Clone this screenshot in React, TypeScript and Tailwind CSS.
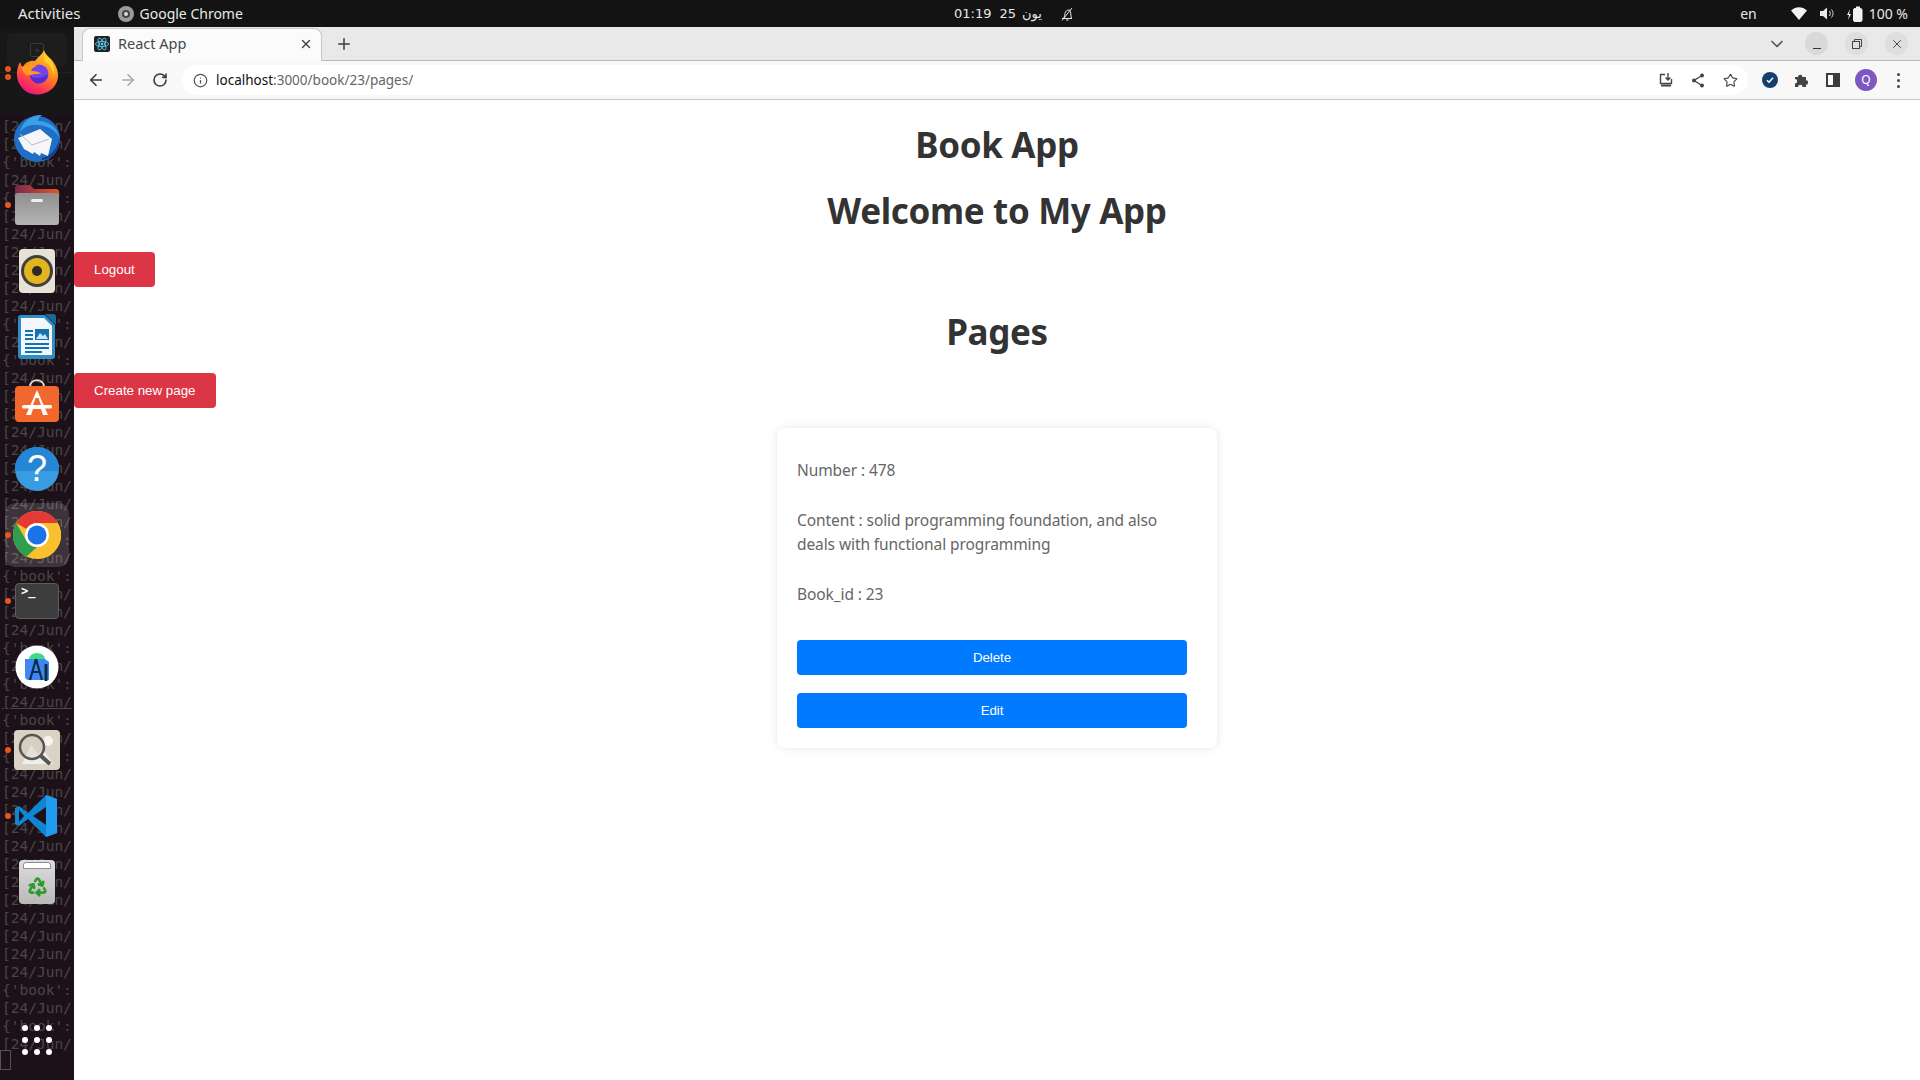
import React from 'react';
import { ArrowLeft, ArrowRight, ChevronDown, Info, Plus, Recycle, RotateCw, Star, X } from 'lucide-react';

// terminal log running behind the translucent dock
const logLines = 'LLBLBLLLLLLBLBLLLLLLLLLBLBLLLBLBLBLBLLLLLLLLLLLLBLBL'.split('');

const Dot = ({ top }: { top: number }) => (
  <span className="absolute left-[5px] h-[6px] w-[6px] rounded-full bg-[#e95420]" style={{ top }} />
);

const DockItem = ({ children, dots = [], className = '' }: { children: React.ReactNode; dots?: number[]; className?: string }) => (
  <div className={`relative flex h-[66px] w-[74px] shrink-0 items-center justify-center ${className}`}>
    {dots.map((d) => (
      <Dot key={d} top={d} />
    ))}
    {children}
  </div>
);

const FirefoxIcon = () => (
  <svg className="mb-[2px]" width="44" height="46" viewBox="0 0 44 46">
    <defs>
      <linearGradient id="ffa" x1="0.8" y1="0" x2="0.3" y2="1">
        <stop offset="0" stopColor="#ffd52e" />
        <stop offset="0.45" stopColor="#ff8a1f" />
        <stop offset="0.78" stopColor="#ff3750" />
        <stop offset="1" stopColor="#e31587" />
      </linearGradient>
    </defs>
    <path d="M29 1c1 5 7 8 10 13 6 9 5 19-1 25-8 8-22 9-30 1C1 33 0 22 5 13c1 2 1 4 3 5 2-5 8-7 12-6 3-4 7-6 9-11z" fill="url(#ffa)" />
    <circle cx="24" cy="25" r="9.500" fill="#7542e5" />
    <path d="M15 27c4 3 12 3 18-2-1 6-5 10-10 9.500-4-.5-7-3.500-8-7.500z" fill="#592acb" />
    <path d="M7 18c5-3 10-4 15-1-4 1-5 3-6 5 5 0 9 1 10 3-5-1-12 2-15 1-2-2-4-5-4-8z" fill="#ff9a1f" />
    <path d="M29 4c6 5 12 13 10 24-1-8-4-13-10-16z" fill="#ffcf2b" />
  </svg>
);

const ThunderbirdIcon = () => (
  <svg className="mb-[2px]" width="50" height="48" viewBox="0 0 50 48">
    <circle cx="25" cy="25" r="23" fill="#1f6fc4" />
    <path d="M8 18C10 8 20 0 30 1c-3 2-4 4-4 6 11 0 20 7 22 17-4-7-11-12-22-13C18 10 12 13 8 18z" fill="#3aa0e8" />
    <path d="M30 44c9-2 16-10 17-19 1 11-7 20-17 21z" fill="#123d8c" />
    <path d="M6 24L28 15l12 10-4 17-7-3-1 3-6-4-1 2-9-5z" fill="#f5f6f8" />
    <path d="M8 20l12 11 17-6" fill="none" stroke="#b9bcc4" strokeWidth="1" />
  </svg>
);

const FilesIcon = () => (
  <svg width="46" height="42" viewBox="0 0 46 42">
    <defs>
      <linearGradient id="fold" x1="0" y1="0" x2="1" y2="0">
        <stop offset="0" stopColor="#77294d" />
        <stop offset="1" stopColor="#e95420" />
      </linearGradient>
      <linearGradient id="foldb" x1="0" y1="0" x2="0" y2="1">
        <stop offset="0" stopColor="#8f8f8f" />
        <stop offset="1" stopColor="#b5b5b5" />
      </linearGradient>
    </defs>
    <path d="M1 4a3 3 0 013-3h12l4 4h22a3 3 0 013 3v14H1z" fill="url(#fold)" />
    <rect x="1" y="9" width="44" height="32" rx="3" fill="url(#foldb)" />
    <rect x="17" y="15" width="12" height="3" rx="1.500" fill="#eeeeee" />
  </svg>
);

const SpeakerIcon = () => (
  <svg width="38" height="46" viewBox="0 0 38 46">
    <rect x="1" y="1" width="36" height="44" rx="4" fill="#e6e2d8" />
    <circle cx="19" cy="23" r="16" fill="#3f3f3f" />
    <circle cx="19" cy="23" r="13" fill="#e2b420" />
    <circle cx="19" cy="23" r="5" fill="#2e2a20" />
  </svg>
);

const WriterIcon = () => (
  <svg width="38" height="46" viewBox="0 0 38 46">
    <path d="M3 1h24l10 10v31a3 3 0 01-3 3H3a3 3 0 01-3-3V4a3 3 0 013-3z" fill="#2d8fc6" />
    <path d="M3 4h23l8 8v29H3z" fill="#f4f7f9" />
    <path d="M27 0l11 11V3a3 3 0 00-3-3z" fill="#1b6a99" />
    <path d="M7 16h8v2H7zM7 20h8v2H7zM7 24h8v2H7zM7 29h24v2H7zM7 33h24v2H7zM7 37h17v2H7z" fill="#1273b2" />
    <path d="M17 15h14v11H17z" fill="#1273b2" />
    <path d="M18 25l4-6 3 3 2-2 3 5z" fill="#cfe5f3" />
  </svg>
);

const SoftwareIcon = () => (
  <svg className="mb-[4px]" width="46" height="44" viewBox="0 0 46 44">
    <path d="M16 8c0-9 14-9 14 0" fill="none" stroke="#e7d7c9" strokeWidth="2" />
    <rect x="1" y="7" width="44" height="36" rx="4" fill="#f2682c" />
    <path d="M23 11l-11 25h5l2-6h8l2 6h5L23 11z" fill="#fff" />
    <path d="M21.500 19h3l2.500 7h-8z" fill="#f2682c" />
    <rect x="8" y="26" width="30" height="3.500" rx="1.500" fill="#fff" />
  </svg>
);

const HelpIcon = () => (
  <div className="relative flex h-[44px] w-[44px] items-center justify-center overflow-hidden rounded-full bg-[#3a9ce0]">
    <span className="absolute inset-x-0 top-0 h-[24px] bg-[#2586d3]" />
    <span className="relative font-['Liberation_Sans',sans-serif] text-[36px] leading-none text-white">?</span>
  </div>
);

const ChromeIcon = ({ size = 48 }: { size?: number }) => (
  <svg width={size} height={size} viewBox="0 0 48 48">
    <circle cx="24" cy="24" r="24" fill="#fbc02d" />
    <path d="M24 0a24 24 0 0120.8 12H24a12 12 0 00-10.400 6L3.200 12A24 24 0 0124 0z" fill="#e53935" />
    <path d="M0 24a24 24 0 013.200-12l10.400 18a12 12 0 0010.400 6L13.600 45.600A24 24 0 010 24z" fill="#2e9e4f" />
    <path d="M24 12h20.800A24 24 0 0124 48l10.400-18A12 12 0 0024 12z" fill="#fbc02d" />
    <circle cx="24" cy="24" r="12" fill="#fff" />
    <circle cx="24" cy="24" r="9.500" fill="#1a73e8" />
  </svg>
);

const TerminalIcon = () => (
  <div className="h-[36px] w-[44px] rounded-[4px] border border-[#5c5c5c] bg-[#3d3d3d] pl-[5px] font-['DejaVu_Sans_Mono',monospace] text-[12px] leading-[14px] font-bold text-white">
    &gt;_
  </div>
);

const StudioIcon = () => (
  <svg width="44" height="44" viewBox="0 0 44 44">
    <circle cx="22" cy="22" r="21.500" fill="#fff" />
    <path d="M14 14a8 6 0 0116 0z" fill="#3ddc84" />
    <path d="M10 14h20l4 3v18H14a4 4 0 01-4-4z" fill="#4285f4" />
    <path d="M21 14l-6 21M21 14l6 21M17.500 27h7" fill="none" stroke="#073042" strokeWidth="2.200" />
    <circle cx="21" cy="17" r="2" fill="#073042" />
    <path d="M31 19v17" stroke="#073042" strokeWidth="3" />
  </svg>
);

const ViewerIcon = () => (
  <svg width="46" height="40" viewBox="0 0 46 40">
    <rect x="0" y="0" width="46" height="40" rx="4" fill="#d8d3c4" />
    <path d="M8 34l9-19 7 9 5-5 10 15z" fill="#eeeeea" />
    <circle cx="34" cy="11" r="5" fill="#f5f4ee" />
    <circle cx="18" cy="17" r="12" fill="#cfcabb" fillOpacity="0.4" stroke="#555" strokeWidth="2.500" />
    <path d="M27 26l9 8" stroke="#555" strokeWidth="4" />
  </svg>
);

const VSCodeIcon = () => (
  <svg width="44" height="44" viewBox="0 0 44 44">
    <path d="M31 1L13 19 4 12 0 14v16l4 2 9-7 18 18 11-4V5z" fill="#0e86d4" />
    <path d="M31 1l11 4v34l-11 4z" fill="#1f9cf0" />
    <path d="M31 13L18 22l13 9z" fill="#1c1119" />
    <path d="M4 16l5 6-5 6z" fill="#1c1119" />
  </svg>
);

const TrashIcon = () => (
  <div className="relative flex h-[44px] w-[36px] items-center justify-center rounded-[4px] bg-gradient-to-b from-[#dedede] to-[#b9b9b9] pt-[8px]">
    <span className="absolute inset-x-[4px] top-[2px] h-[7px] rounded-t-[3px] border border-[#8d8d8d] bg-white" />
    <Recycle size={21} strokeWidth={3} className="text-[#2f9a2b]" />
  </div>
);

const AppGrid = () => (
  <div className="grid grid-cols-3 gap-[6px]">
    {Array.from({ length: 9 }).map((_, i) => (
      <span key={i} className="h-[6px] w-[6px] rounded-full bg-white" />
    ))}
  </div>
);

const Dock = () => (
  <aside className="relative w-[74px] shrink-0 overflow-hidden bg-[#1c1119]">
    <div className="h-[87px] bg-[#171717]">
      <div className="h-[46px] border-b border-[#222] px-[7px] pt-[6px]">
        <div className="flex h-[34px] items-center justify-center rounded-[5px] bg-[#1d1d1d]">
          <span className="flex h-[14px] w-[14px] items-center justify-center rounded-[2px] border border-[#3a3a3a] text-[10px] leading-none text-[#3a3a3a]">+</span>
        </div>
      </div>
    </div>
    <div className="pt-[3px] pl-[2px] font-['DejaVu_Sans_Mono',monospace] text-[14.5px] leading-[18px] whitespace-nowrap text-[#4a4745]">
      {logLines.map((kind, i) =>
        kind === 'L' ? (
          <div key={i} className={i === 32 ? 'underline' : ''}>
            [24/Jun/
          </div>
        ) : (
          <div key={i}>{"{'book':"}</div>
        ),
      )}
    </div>
    <span className="absolute bottom-[10px] left-0 h-[20px] w-[11px] border border-[#55505a] bg-[#1c1119]" />

    <div className="absolute inset-0 flex flex-col items-center pt-[13px]">
      <DockItem dots={[26, 34]}>
        <FirefoxIcon />
      </DockItem>
      <DockItem>
        <ThunderbirdIcon />
      </DockItem>
      <DockItem dots={[30]}>
        <FilesIcon />
      </DockItem>
      <DockItem>
        <SpeakerIcon />
      </DockItem>
      <DockItem>
        <WriterIcon />
      </DockItem>
      <DockItem>
        <SoftwareIcon />
      </DockItem>
      <DockItem>
        <HelpIcon />
      </DockItem>
      <DockItem dots={[30]}>
        <div className="flex h-[64px] w-[64px] items-center justify-center rounded-[10px] bg-white/15">
          <ChromeIcon />
        </div>
      </DockItem>
      <DockItem dots={[30]}>
        <TerminalIcon />
      </DockItem>
      <DockItem>
        <StudioIcon />
      </DockItem>
      <DockItem dots={[30]} className="mt-[17px]">
        <ViewerIcon />
      </DockItem>
      <DockItem dots={[30]}>
        <VSCodeIcon />
      </DockItem>
      <DockItem>
        <TrashIcon />
      </DockItem>
      <DockItem className="mt-auto mb-[7px]">
        <AppGrid />
      </DockItem>
    </div>
  </aside>
);

const TopBar = () => (
  <header className="relative flex h-[27px] shrink-0 items-center bg-[#131313] font-['Noto_Sans',sans-serif] text-[14px] text-[#e8e8e8]">
    <span className="ml-[18px] text-[15px]">Activities</span>
    <span className="ml-[37px] flex items-center gap-[6px]">
      <span className="flex h-[16px] w-[16px] items-center justify-center rounded-full bg-[#9a9a9a]">
        <span className="h-[8px] w-[8px] rounded-full border-2 border-[#444] bg-[#ddd]" />
      </span>
      Google Chrome
    </span>
    <div className="absolute left-[954px] flex items-center font-['DejaVu_Sans',sans-serif] text-[13px]">
      <span>01:19</span>
      <span className="ml-[8px]">25</span>
      <span className="ml-[6px]">یون</span>
      <svg className="ml-[18px]" width="14" height="14" viewBox="0 0 14 14" fill="none" stroke="#e8e8e8" strokeWidth="1">
        <path d="M2 11.500h10M3.500 11.500c1.500-2 1-4.500 2-6.500S9 2.500 10 3.500s.5 5 1.500 8M6 13h2.500M2 13.500L12 1" />
      </svg>
    </div>
    <div className="ml-auto flex items-center">
      <span>en</span>
      <svg className="ml-[34px]" width="16" height="13" viewBox="0 0 16 13">
        <path d="M0 3.500C4.500-1 11.500-1 16 3.500L8 13z" fill="#f2f2f2" />
      </svg>
      <svg className="ml-[13px]" width="15" height="13" viewBox="0 0 15 13" fill="none">
        <path d="M0 4h3l4-3.500v12L3 9H0z" fill="#e8e8e8" />
        <path d="M9.500 4c1 1.500 1 3.500 0 5M11.500 2.500c2 2.500 2 5.500 0 8" stroke="#e8e8e8" />
      </svg>
      <svg className="ml-[12px]" width="16" height="16" viewBox="0 0 16 16" fill="none">
        <path d="M3 3L0 9h2l-1 5 3-6H2z" fill="#f2f2f2" />
        <rect x="6.500" y="2.500" width="8.500" height="13" rx="1.500" fill="#f2f2f2" stroke="#f2f2f2" />
        <rect x="9" y="0.500" width="4" height="2" fill="#f2f2f2" />
      </svg>
      <span className="mr-[12px] ml-[6px]">100 %</span>
    </div>
  </header>
);

const TabStrip = () => (
  <div className="relative flex h-[34px] shrink-0 items-end border-b border-[#b9b9b9] bg-[#e9e9e9] font-['Noto_Sans',sans-serif]">
    <div className="relative z-10 ml-[8px] -mb-px flex h-[33px] w-[240px] items-center rounded-t-[8px] border-x border-t border-[#c8c8c8] bg-[#fbfbfb] pr-[8px] pb-[3px] pl-[11px]">
      <svg width="16" height="16" viewBox="0 0 16 16" fill="none" stroke="#61dafb" strokeWidth="0.8">
        <rect width="16" height="16" rx="2" fill="#20232a" stroke="none" />
        <ellipse cx="8" cy="8" rx="6.500" ry="2.600" />
        <ellipse cx="8" cy="8" rx="6.500" ry="2.600" transform="rotate(60 8 8)" />
        <ellipse cx="8" cy="8" rx="6.500" ry="2.600" transform="rotate(120 8 8)" />
        <circle cx="8" cy="8" r="1.300" fill="#61dafb" stroke="none" />
      </svg>
      <span className="ml-[8px] text-[14.5px] text-[#45494d]">React App</span>
      <X size={14} strokeWidth={2.5} className="ml-auto text-[#444]" />
    </div>
    <Plus size={18} strokeWidth={2} className="mb-[7px] ml-[13px] text-[#3c3c3c]" />
    <ChevronDown size={20} strokeWidth={2} className="mb-[6px] ml-auto text-[#555]" />
    <div className="mr-[12px] mb-[5px] ml-[18px] flex gap-[17px]">
      <span className="flex h-[23px] w-[23px] items-end justify-center rounded-full bg-[#d9d9d9] pb-[6px]">
        <span className="h-[1px] w-[8px] bg-[#333]" />
      </span>
      <span className="relative flex h-[23px] w-[23px] items-center justify-center rounded-full bg-[#dedede]">
        <svg width="10" height="10" viewBox="0 0 10 10" fill="none" stroke="#444">
          <rect x="0.500" y="2.500" width="7" height="7" />
          <path d="M2.500 2.500v-2h7v7h-2" />
        </svg>
      </span>
      <span className="flex h-[23px] w-[23px] items-center justify-center rounded-full bg-[#dedede]">
        <X size={14} strokeWidth={1.5} className="text-[#333]" />
      </span>
    </div>
  </div>
);

const ToolBar = () => (
  <div className="flex h-[39px] shrink-0 items-center border-b border-[#c8c8c8] bg-[#f8f8f8] font-['Noto_Sans',sans-serif]">
    <ArrowLeft size={18} strokeWidth={2.2} className="ml-[13px] text-[#3c3c3c]" />
    <ArrowRight size={18} strokeWidth={2.2} className="ml-[14px] text-[#a9a9a9]" />
    <RotateCw size={16} strokeWidth={2.4} className="ml-[15px] text-[#3c3c3c]" />
    <div className="ml-[14px] flex h-[30px] flex-1 items-center rounded-full bg-white pl-[11px]">
      <Info size={15} strokeWidth={2} className="text-[#555]" />
      <span className="ml-[8px] text-[13.5px] text-[#111]">localhost</span>
      <span className="text-[13.5px] text-[#666]">:3000/book/23/pages/</span>
      <svg className="ml-auto" width="16" height="16" viewBox="0 0 16 16" fill="none" stroke="#444" strokeWidth="1.400">
        <path d="M13.500 7v4.500h-11v-9H7M10 1v6.500M7.500 5.500L10 8l2.500-2.500" />
        <path d="M3 13.500h10" strokeWidth="2" />
      </svg>
      <svg className="ml-[17px]" width="14" height="15" viewBox="0 0 14 15" fill="none" stroke="#444" strokeWidth="1.300">
        <path d="M11 2.500L3 7.500l8 5" />
        <circle cx="11" cy="2.500" r="2" fill="#444" stroke="none" />
        <circle cx="3" cy="7.500" r="2" fill="#444" stroke="none" />
        <circle cx="11" cy="12.500" r="2" fill="#444" stroke="none" />
      </svg>
      <Star size={15} strokeWidth={1.8} className="mr-[10px] ml-[18px] text-[#444]" />
    </div>
    <span className="ml-[14px] flex h-[16px] w-[16px] items-center justify-center rounded-full bg-[#163e6b]">
      <svg width="10" height="10" viewBox="0 0 10 10" fill="none" stroke="#fff" strokeWidth="1.500">
        <path d="M2 5.200l2 2 4-4.400" />
      </svg>
    </span>
    <svg className="ml-[16px]" width="16" height="16" viewBox="0 0 16 16">
      <path d="M1 5h3a2.200 2.200 0 114.400 0H12v3.300a2.200 2.200 0 110 4.400V15H8.500a2.200 2.200 0 10-4.400 0H1v-3.500a2.200 2.200 0 100-4.400z" fill="#444" />
    </svg>
    <span className="ml-[16px] flex h-[14px] w-[14px] justify-end border-[2px] border-[#3c3c3c] bg-white">
      <span className="h-full w-[5px] bg-[#3c3c3c]" />
    </span>
    <span className="ml-[15px] flex h-[22px] w-[22px] items-center justify-center rounded-full bg-[#7e57c2] text-[12px] text-white">Q</span>
    <span className="mr-[20px] ml-[20px] flex flex-col gap-[3px]">
      <span className="h-[3px] w-[3px] rounded-full bg-[#444]" />
      <span className="h-[3px] w-[3px] rounded-full bg-[#444]" />
      <span className="h-[3px] w-[3px] rounded-full bg-[#444]" />
    </span>
  </div>
);

const RedButton = ({ children }: { children: React.ReactNode }) => (
  <button className="mt-5 h-[35px] self-start rounded-[4px] bg-[#dc3545] px-5 font-['Liberation_Sans',sans-serif] text-[13.333px] text-white">
    {children}
  </button>
);

const BlueButton = ({ children }: { children: React.ReactNode }) => (
  <button className="h-[35px] w-[390px] rounded-[4px] bg-[#007bff] font-['Liberation_Sans',sans-serif] text-[13.333px] text-white">
    {children}
  </button>
);

const Title = ({ children }: { children: React.ReactNode }) => (
  <h1 className="mt-[25px] h-[41px] text-center text-[35px] leading-[39px] font-bold tracking-[-0.35px] text-[#333]">{children}</h1>
);

const PageCard = () => (
  <div className="mx-auto mt-5 h-[320px] w-[440px] rounded-[8px] bg-white p-5 text-[15.5px] leading-[24px] tracking-[-0.09px] text-[#666] shadow-[0_0_10px_rgba(0,0,0,0.1)]">
    <p className="mt-[10px] h-[24px]">Number : 478</p>
    <p className="mt-[26px] w-[400px]">Content : solid programming foundation, and also deals with functional programming</p>
    <p className="mt-[26px] h-[24px]">Book_id : 23</p>
    <div className="mt-[34px] flex flex-col gap-[18px]">
      <BlueButton>Delete</BlueButton>
      <BlueButton>Edit</BlueButton>
    </div>
  </div>
);

export default function App() {
  return (
    <div className="flex h-[1080px] w-[1920px] flex-col overflow-hidden bg-white">
      <TopBar />
      <div className="flex min-h-0 flex-1">
        <Dock />
        <div className="flex min-w-0 flex-1 flex-col">
          <TabStrip />
          <ToolBar />
          <main className="flex flex-1 flex-col font-['Noto_Sans',sans-serif]">
            <Title>Book App</Title>
            <Title>Welcome to My App</Title>
            <RedButton>Logout</RedButton>
            <Title>Pages</Title>
            <RedButton>Create new page</RedButton>
            <PageCard />
          </main>
        </div>
      </div>
    </div>
  );
}
